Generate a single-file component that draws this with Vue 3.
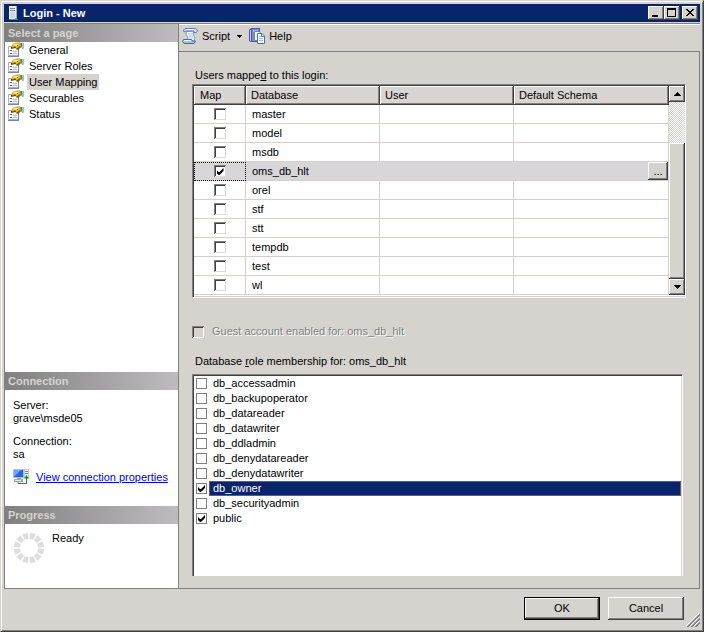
<script setup>
import { ref } from 'vue'

const pages = ['General', 'Server Roles', 'User Mapping', 'Securables', 'Status']
const activePage = ref('User Mapping')

const databases = ref([
  { name: 'master', mapped: false },
  { name: 'model', mapped: false },
  { name: 'msdb', mapped: false },
  { name: 'oms_db_hlt', mapped: true },
  { name: 'orel', mapped: false },
  { name: 'stf', mapped: false },
  { name: 'stt', mapped: false },
  { name: 'tempdb', mapped: false },
  { name: 'test', mapped: false },
  { name: 'wl', mapped: false }
])
const activeDatabase = ref('oms_db_hlt')

const roles = ref([
  { name: 'db_accessadmin', member: false },
  { name: 'db_backupoperator', member: false },
  { name: 'db_datareader', member: false },
  { name: 'db_datawriter', member: false },
  { name: 'db_ddladmin', member: false },
  { name: 'db_denydatareader', member: false },
  { name: 'db_denydatawriter', member: false },
  { name: 'db_owner', member: true },
  { name: 'db_securityadmin', member: false },
  { name: 'public', member: true }
])
const activeRole = ref('db_owner')

const spokes = Array.from({ length: 12 }, (_, i) => i * 30 + 15)
</script>

<template>
  <div class="window">
    <header class="titlebar">
      <svg class="title-icon" width="16" height="16" viewBox="0 0 16 16" shape-rendering="crispEdges">
        <path d="M4 1h8v14H4z" fill="#9aa8bf" />
        <path d="M4 1h7v13H4z" fill="#e9eff7" />
        <path d="M5 3h5v1H5zM5 5h5v1H5z" fill="#7586a5" />
        <path d="M5 7h5v6H5z" fill="#cbd6e6" />
        <path d="M4 14h9v1H4z" fill="#66779a" />
        <path d="M10 13h2v1h-2z" fill="#45b649" />
      </svg>
      <h1>Login - New</h1>
      <div class="window-buttons">
        <button type="button" class="raised" aria-label="Minimize">
          <svg width="12" height="10" shape-rendering="crispEdges"><path d="M2 7h6v2H2z" /></svg>
        </button>
        <button type="button" class="raised" aria-label="Maximize">
          <svg width="12" height="10" shape-rendering="crispEdges"><path fill-rule="evenodd" d="M1 0h9v9H1zM2 2v6h7V2z" /></svg>
        </button>
        <button type="button" class="raised close" aria-label="Close">
          <svg width="12" height="10" shape-rendering="crispEdges">
            <path d="M2 1h2v1h1v1h2V2h1V1h2v1H9v1H8v1H7v1h1v1h1v1h1v1H8V7H7V6H5v1H4v1H2V7h1V6h1V5h1V4H4V3H3V2H2z" />
          </svg>
        </button>
      </div>
    </header>

    <main class="body">
      <aside class="side">
        <nav class="pages">
          <h2>Select a page</h2>
          <ul>
            <li v-for="page in pages" :key="page">
              <svg width="16" height="16" viewBox="0 0 16 16">
                <path d="M.5 4.500h10v9H.5z" fill="#f7faff" stroke="#9fb0d2" />
                <path d="M0 14h11v1H0zM10 6h1v9h-1z" fill="#7188b6" />
                <path d="M2 8h2v1H2zM2 11h2v1H2z" fill="#3c5fc4" />
                <path d="M5 9h4v1H5zM5 11h4v1H5z" fill="#a9b8dc" />
                <path d="M12 1h3v5l-3-1z" fill="#3f9150" />
                <path d="M14 1h2v6h-2z" fill="#9dbfd0" />
                <path d="M3 4 6 1l6-1 1 5-4 3-2-2-3 1z" fill="#e8b62c" />
                <path d="M5 3l2-1h4L8 4z" fill="#fff2a0" />
                <path d="M3 5h3l1-1 1 1-1 1-4 1zM8 7l4-3 1 1-3 3zM9 3h1v1H9zM7 5h1v1H7z" fill="#7b5810" />
              </svg>
              <a href="#" :class="{ active: page === activePage }" @click.prevent="activePage = page">{{ page }}</a>
            </li>
          </ul>
        </nav>

        <section class="connection">
          <h2>Connection</h2>
          <dl>
            <dt>Server:</dt>
            <dd>grave\msde05</dd>
            <dt>Connection:</dt>
            <dd>sa</dd>
          </dl>
          <p class="view-link">
            <svg width="16" height="16" viewBox="0 0 16 16">
              <path d="M11 0h5v9h-5z" fill="#c2c9d6" />
              <path d="M12 1h3v7h-3z" fill="#eef1f6" />
              <path d="M12 2h3v1h-3zM12 4h3v1h-3z" fill="#7c889f" />
              <path d="M0 0h11v9H0z" fill="#a9bfe9" />
              <path d="M1 1h9v7H1z" fill="#2a63dd" />
              <path d="M1 1h7L2 7H1z" fill="#6da4ff" />
              <path d="M4 9h4v1H4zM1 10h9v3H1z" fill="#9aa7c4" />
              <path d="M2 11h6v1H2z" fill="#e0e6f2" />
              <path d="M5 13v1.500h8.500V9" fill="none" stroke="#159018" />
              <path d="M13.500 6 11 9.500h5z" fill="#159018" />
            </svg>
            <a href="#">View connection properties</a>
          </p>
        </section>

        <section class="progress">
          <h2>Progress</h2>
          <div class="status">
            <svg width="32" height="32" viewBox="-16 -16 32 32">
              <path v-for="angle in spokes" :key="angle" d="M-3-15h6L2-9h-4z" fill="#dedcdf" :transform="`rotate(${angle})`" />
            </svg>
            <span>Ready</span>
          </div>
        </section>
      </aside>

      <div class="content">
        <div class="toolbar">
          <button type="button" class="tool">
            <svg width="16" height="16" viewBox="0 0 16 16">
              <path d="M4.500 3.500 12 3l-1 3 2 4-1 3H5l1-3-2-4z" fill="#edf4fe" stroke="#7c98c6" />
              <path d="M3 .5h10.500l2 1.500-1 2.500h-3L12 3H4L2 4 1.500 2z" fill="#cfdff5" stroke="#5f7fb4" />
              <path d="M4 1.500h8" stroke="#fff" />
              <path d="M1.500 11.500h8l1 1.500h3l-1.500 2.500H2L.5 13.500z" fill="#a9c1e6" stroke="#4a699f" />
              <path d="M2 12.500h7" stroke="#edf4fe" />
              <path d="M6 6h4M7 8h4M7 10h4" stroke="#b3c8e8" />
            </svg>
            <span>Script</span>
            <svg class="caret" width="5" height="3" shape-rendering="crispEdges"><path d="M0 0h5v1H4v1H3v1H2V2H1V1H0z" /></svg>
          </button>
          <button type="button" class="tool">
            <svg width="16" height="16" viewBox="0 0 16 16">
              <path d="M0 2l2-2h9v14H2l-2-1z" fill="#4f559f" />
              <path d="M1 2h1v11H1z" fill="#c3c8ee" />
              <path d="M3 1h7v12H3z" fill="#7f88cc" />
              <path d="M4 2h5v2H4z" fill="#a9b1e4" />
              <path d="M5.500 3.500H10l2 2v7H5.500z" fill="#f4f8ff" stroke="#7087b5" />
              <path d="M8.500 5.500H13L15.500 8v7.500h-7z" fill="#fff" stroke="#536da3" />
              <path d="M10 8.500h2M10 10.500h4M10 12.500h4" stroke="#9ab8e6" />
              <path d="M12.500 6v2.500H15" fill="none" stroke="#536da3" />
            </svg>
            <span>Help</span>
          </button>
        </div>

        <div class="page">
          <p id="users-label" class="caption">Users mappe<u>d</u> to this login:</p>
          <div class="grid">
            <table aria-labelledby="users-label">
              <thead>
                <tr>
                  <th class="map">Map</th>
                  <th class="mid">Database</th>
                  <th class="mid">User</th>
                  <th>Default Schema</th>
                </tr>
              </thead>
              <tbody>
                <tr v-for="db in databases" :key="db.name" :class="{ current: db.name === activeDatabase }">
                  <td class="map"><input v-model="db.mapped" type="checkbox" class="check sunken" :aria-label="db.name" /></td>
                  <td>{{ db.name }}</td>
                  <td></td>
                  <td class="schema">
                    <button v-if="db.name === activeDatabase" type="button" class="raised browse">...</button>
                  </td>
                </tr>
              </tbody>
            </table>
            <div class="scrollbar">
              <button type="button" class="raised" aria-label="Scroll up">
                <svg width="7" height="4" shape-rendering="crispEdges"><path d="M3 0h1v1h1v1h1v1h1v1H0V3h1V2h1V1h1z" /></svg>
              </button>
              <div class="track"></div>
              <div class="thumb raised"></div>
              <button type="button" class="raised" aria-label="Scroll down">
                <svg width="7" height="4" shape-rendering="crispEdges"><path d="M0 0h7v1H6v1H5v1H4v1H3V3H2V2H1V1H0z" /></svg>
              </button>
            </div>
          </div>

          <label class="guest">
            <input type="checkbox" class="check sunken" disabled />
            <span>Guest account enabled for: oms_db_hlt</span>
          </label>

          <p class="caption">Database <u>r</u>ole membership for: oms_db_hlt</p>
          <div class="roles">
            <label v-for="role in roles" :key="role.name" :class="{ selected: role.name === activeRole }">
              <input v-model="role.member" type="checkbox" class="check flat" />
              <span>{{ role.name }}</span>
            </label>
          </div>
        </div>
      </div>
    </main>

    <footer class="footer">
      <button type="button" class="raised command default">OK</button>
      <button type="button" class="raised command">Cancel</button>
      <svg class="grip" width="14" height="14" viewBox="0 0 14 14">
        <path d="M0 13 13 0M4 13l9-9M8 13l5-5" stroke="#fff" />
        <path d="M1 14 14 1M2 14 14 2M5 14l9-9M6 14l8-8M9 14l5-5M10 14l4-4" stroke="#808080" />
      </svg>
    </footer>
  </div>
</template>

<style>
body {
  margin: 0;
  background: #d6d3ce;
}
</style>

<style scoped>
* {
  box-sizing: border-box;
}

.window {
  display: flex;
  flex-direction: column;
  min-height: 100vh;
  padding: 3px;
  border: 1px solid;
  border-color: #d6d3ce #404040 #404040 #d6d3ce;
  background: #d6d3ce;
  box-shadow: inset 1px 1px #fff, inset -1px -1px #808080;
  color: #000;
  font: 11px/13px "Liberation Sans", Arial, sans-serif;
}

h1,
h2,
p,
ul,
dl,
dd {
  margin: 0;
  padding: 0;
}

button {
  margin: 0;
  padding: 0;
  border: 0;
  background: #d6d3ce;
  color: #000;
  font: inherit;
}

.raised {
  display: flex;
  align-items: center;
  justify-content: center;
  box-shadow: inset -1px -1px #404040, inset 1px 1px #fff, inset -2px -2px #808080;
}

.titlebar {
  display: flex;
  align-items: center;
  height: 18px;
  padding-right: 2px;
  background: #08246b;
}

.title-icon {
  margin: 0 2px 0 1px;
}

h1 {
  flex: 1;
  color: #fff;
  font-size: 11px;
  line-height: 18px;
}

.window-buttons {
  display: flex;
}

.window-buttons button {
  width: 16px;
  height: 14px;
}

.window-buttons .close {
  margin-left: 2px;
}

.body {
  display: flex;
  flex: 1;
  margin-top: 1px;
  border: 1px solid #808080;
  border-right: 0;
}

.side {
  display: flex;
  flex: none;
  flex-direction: column;
  width: 174px;
  border-right: 1px solid #808080;
  background: #fff;
}

h2 {
  height: 18px;
  padding-left: 3px;
  background: linear-gradient(90deg, #808080, #bfbcc0);
  color: #d6d3ce;
  font-size: 11px;
  line-height: 18px;
}

.pages {
  flex: 1;
}

.pages ul {
  list-style: none;
}

.pages li {
  display: flex;
  align-items: center;
  gap: 3px;
  height: 16px;
  padding-left: 3px;
}

.pages a {
  padding: 0 2px;
  color: #000;
  line-height: 16px;
  text-decoration: none;
}

.pages .active {
  background: #d6d3ce;
}

.connection {
  height: 134px;
}

.connection dl {
  padding: 9px 8px 0;
}

.connection dt:not(:first-child) {
  margin-top: 10px;
}

.view-link {
  display: flex;
  align-items: center;
  gap: 7px;
  padding: 8px 0 0 8px;
}

.view-link a {
  color: #00f;
}

.progress {
  height: 82px;
}

.status {
  display: flex;
  gap: 7px;
  padding: 8px;
}

.content {
  display: flex;
  flex: 1;
  flex-direction: column;
  min-width: 0;
  border-top: 1px solid #fff;
}

.toolbar {
  display: flex;
  gap: 7px;
  height: 26px;
  padding: 3px;
}

.tool {
  display: flex;
  align-items: center;
  gap: 4px;
  height: 16px;
}

.caret {
  margin-left: 3px;
}

.page {
  display: flex;
  flex: 1;
  flex-direction: column;
  padding: 17px 13px 12px;
  border-top: 1px solid #808080;
  border-right: 1px solid #808080;
}

.caption {
  padding-left: 3px;
}

.grid {
  display: flex;
  margin-top: 2px;
  padding: 1px 0 2px 1px;
  border: 1px solid;
  border-color: #808080 #fff #fff #808080;
  background: #fff;
  box-shadow: inset 1px 1px #404040, inset 0 -1px #d6d3ce;
}

table {
  flex: 1;
  border-collapse: separate;
  border-spacing: 0;
  table-layout: fixed;
}

th {
  height: 19px;
  padding: 0 0 1px 5px;
  background: #dad5d2;
  box-shadow: inset -1px -1px #404040, inset 1px 1px #fff, inset -2px -2px #808080;
  font-weight: 400;
  text-align: left;
}

th.map {
  width: 52px;
  padding-left: 6px;
}

.mid {
  width: 134px;
}

td {
  height: 19px;
  padding: 0 0 0 6px;
  border-right: 1px solid #d6d0cd;
  border-bottom: 1px solid #d6d0cd;
}

td.map {
  padding: 0;
}

td .check {
  margin: 0 auto;
}

.schema {
  padding: 0;
}

.current td {
  border-right-color: #d8d6d9;
  background: #d8d6d9;
}

.current td.map {
  outline: 1px dotted #000;
  outline-offset: -1px;
}

.browse {
  width: 20px;
  height: 18px;
  margin-left: auto;
}

.scrollbar {
  display: flex;
  flex: none;
  flex-direction: column;
  width: 16px;
}

.scrollbar button {
  height: 16px;
}

.track {
  flex: 41;
  background: repeating-conic-gradient(#fff 0 25%, #d6d3ce 0 50%) 0 0 / 2px 2px;
}

.thumb {
  flex: 138;
  background: #d6d3ce;
}

.check {
  position: relative;
  display: block;
  flex: none;
  width: 12px;
  height: 12px;
  margin: 0;
  appearance: none;
  background: #fff;
}

.sunken {
  box-shadow: inset 1px 1px #808080, inset -1px -1px #dedbd7, inset 2px 2px #404040;
}

.flat {
  width: 11px;
  height: 11px;
  border: 1px solid #808080;
}

.check:checked::after {
  position: absolute;
  top: 3px;
  left: 3px;
  width: 7px;
  height: 7px;
  background: #000;
  clip-path: polygon(0 2px, 2px 4px, 3px 4px, 7px 0, 7px 3px, 3px 7px, 2px 7px, 0 5px);
  content: "";
}

.flat:checked::after {
  top: 1px;
  left: 1px;
}

.guest {
  display: flex;
  align-items: center;
  gap: 8px;
  height: 13px;
  margin: 27px 0 17px;
  color: #808080;
  text-shadow: 1px 1px #fff;
}

.check:disabled {
  background: #dad0cd;
  box-shadow: inset 1px 1px #808080, inset -1px -1px #fff, inset 2px 2px #404040;
}

.roles {
  flex: 1;
  margin: 6px 3px 0 0;
  padding: 1px 1px 0 3px;
  border: 1px solid;
  border-color: #808080 #fff transparent #808080;
  border-bottom: 0;
  background: #fff;
  box-shadow: inset 1px 1px #404040, inset -1px 0 #d6d3ce;
}

.roles label {
  display: flex;
  align-items: center;
  gap: 2px;
  height: 15px;
}

.roles span {
  flex: 1;
  padding-left: 3px;
  border: 1px solid transparent;
}

.roles .selected span {
  border-color: #6b6140;
  background: #08246b;
  color: #fff;
}

.footer {
  position: relative;
  display: flex;
  justify-content: flex-end;
  gap: 8px;
  height: 39px;
  padding: 8px 16px 0 0;
}

.command {
  width: 76px;
  height: 23px;
}

.default {
  border: 1px solid #000;
}

.grip {
  position: absolute;
  right: 0;
  bottom: 1px;
}
</style>
